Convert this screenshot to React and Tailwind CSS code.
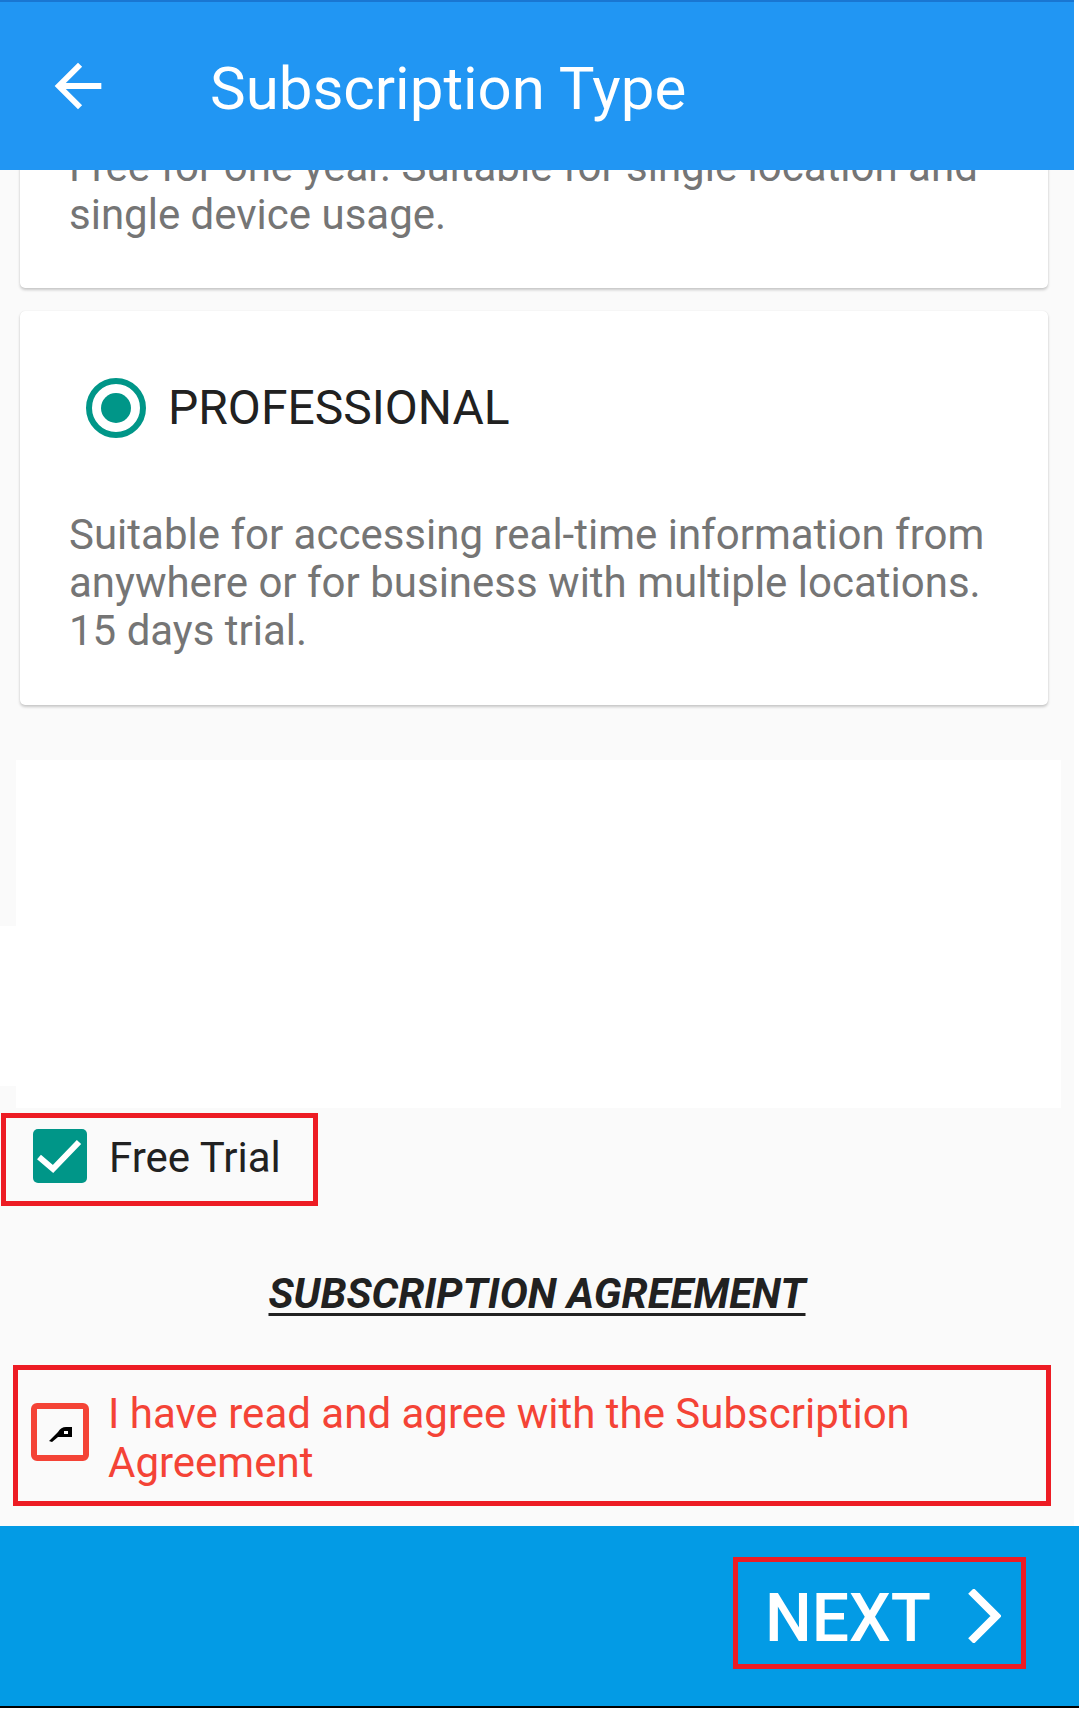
import React from 'react';

const Radio = () => (
  <div className="flex h-[60px] w-[60px] shrink-0 items-center justify-center rounded-full border-[6px] border-[#009688]">
    <div className="h-[30px] w-[30px] rounded-full bg-[#009688]" />
  </div>
);

const PlanCard = ({ className, title, children }) => (
  <div
    className={`ml-[20px] w-[1028px] rounded-[5px] bg-white shadow-[0_2px_3px_rgba(0,0,0,0.2),0_0_1px_rgba(0,0,0,0.12)] ${className}`}
  >
    {title && (
      <div className="flex items-center pl-[66px]">
        <Radio />
        <span className="ml-[22px] text-[48px] leading-[56px] text-[#212121]">{title}</span>
      </div>
    )}
    <p className="pl-[49px] pr-[40px] text-[42px] leading-[48px] text-[#757575]">{children}</p>
  </div>
);

const App = () => {
  return (
    <div className="flex h-[1713px] w-[1079px] flex-col overflow-hidden bg-white font-[Roboto]">
      <div className="flex h-[1526px] shrink-0 overflow-hidden">
        <div className="flex w-[1074px] shrink-0 flex-col bg-[#FAFAFA]">
          {/* app bar */}
          <div className="relative z-10 flex h-[170px] shrink-0 items-center border-t-2 border-[#1976D2] bg-[#2196F3] pl-[43px]">
            <svg width="70" height="70" viewBox="0 0 24 24" fill="white">
              <path d="M20 11H7.83l5.59-5.59L12 4l-8 8 8 8 1.41-1.41L7.83 13H20v-2z" />
            </svg>
            <h1 className="ml-[97px] pt-[5px] text-[60px] font-normal text-white">Subscription Type</h1>
          </div>

          <div className="flex flex-1 flex-col overflow-hidden">
            <PlanCard className="mt-[-27px] pb-[49px]">
              Free for one year. Suitable for single location and single device usage.
            </PlanCard>

            <PlanCard className="mt-[23px] pt-[67px] pb-[50px] [&>p]:mt-[73px]" title="PROFESSIONAL">
              Suitable for accessing real-time information from anywhere or for business with multiple
              locations. 15 days trial.
            </PlanCard>

            {/* empty white area */}
            <div className="mt-[55px] flex items-start">
              <div className="mt-[166px] h-[160px] w-[16px] bg-white" />
              <div className="h-[348px] w-[1045px] bg-white" />
            </div>

            {/* free trial */}
            <div className="ml-[1px] mt-[5px] flex h-[93px] w-[317px] items-center border-[5px] border-[#ED1C24] pl-[27px]">
              <div className="mb-[7px] flex h-[54px] w-[54px] items-center justify-center rounded-[5px] bg-[#009688]">
                <svg width="54" height="54" viewBox="0 0 54 54">
                  <path d="M6 28 L20 40 L46 13" fill="none" stroke="white" strokeWidth="6" />
                </svg>
              </div>
              <span className="ml-[22px] mb-[4px] text-[42px] text-[#212121]">Free Trial</span>
            </div>

            <div className="mt-[56px] text-center">
              <span className="text-[42px] font-bold italic text-[#212121] underline decoration-[3px] underline-offset-[5px]">
                SUBSCRIPTION AGREEMENT
              </span>
            </div>

            {/* agreement */}
            <div className="ml-[13px] mt-[40px] flex h-[141px] w-[1038px] items-start border-[5px] border-[#ED1C24] pl-[13px] pt-[19px]">
              <div className="mt-[14px] flex h-[58px] w-[58px] shrink-0 items-center justify-center rounded-[6px] border-[6px] border-[#F44336]">
                <svg width="24" height="18" viewBox="0 0 24 18" className="ml-[2px] mt-[4px]">
                  <path d="M0 16 L9 7 Q12 2 17 2 L23 2 L23 12 L9 12 L3 17 Z" fill="black" />
                  <rect x="15" y="6" width="4" height="3" fill="white" />
                </svg>
              </div>
              <p className="ml-[19px] w-[880px] text-[42px] leading-[49px] text-[#F44336]">
                I have read and agree with the Subscription Agreement
              </p>
            </div>
          </div>
        </div>
        <div className="flex-1 bg-white" />
      </div>

      {/* bottom bar */}
      <div className="flex h-[182px] shrink-0 items-start justify-end border-b-2 border-black bg-[#039BE5] pr-[53px] pt-[31px]">
        <div className="flex h-[112px] w-[293px] items-start border-[5px] border-[#ED1C24] pl-[27px] pt-[24px]">
          <span className="text-[66px] font-medium leading-none text-white">NEXT</span>
          <svg width="34" height="54" viewBox="0 0 34 54" className="ml-[36px] mt-[3px]">
            <path d="M4 2 L29 27 L4 52" fill="none" stroke="white" strokeWidth="8" />
          </svg>
        </div>
      </div>
    </div>
  );
};

export default App;
